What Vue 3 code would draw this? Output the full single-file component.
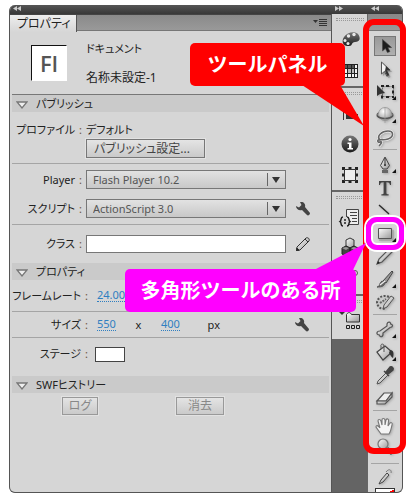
<script setup>
import { ref } from 'vue'

const player = ref('Flash Player 10.2')
const script = ref('ActionScript 3.0')
const className = ref('')

const corner = '<path d="M23 15v4h-4z" fill="#111"/>'

const toolGroups = [
  [
    { name: '選択', active: true, art: '<path d="M9 3v14l3.500-3 2.500 5 3-1.200-2.500-5h4.500z" fill="#1c1c1c" stroke="#444" stroke-width=".8"/>' },
    { name: 'ダイレクト選択', art: '<path d="M9 4v13l3-3 2.500 5 2-1-2.300-5h4z" fill="#777" opacity=".5" transform="translate(1 1)"/><path d="M8.500 4v12l3-2.700 2.300 5 2-1-2.300-5h3.500z" fill="#f4f4f4" stroke="#555" stroke-width="1"/><path d="M12 13l2 5 2-1-2.300-5h3.500L13 8z" fill="#333"/>' },
    { name: '自由変形', art: '<path d="M9.500 5.500h11v10h-11z" fill="none" stroke="#666" stroke-dasharray="2 1"/><path d="M8 4h3v2H8zM13 4h3v2h-3zM19 4h2v3h-2zM19 9.500h2v3h-2zM8 14.500h2v3H8zM13 15h3v2h-3zM19 15h2v2h-2z" fill="#222"/><path d="M4 4v11l3-2 5-1z" fill="#333"/>' + corner },
    { name: '3D 回転', art: '<ellipse cx="12" cy="11" rx="8" ry="3.500" fill="none" stroke="#666" stroke-width="1.300"/><circle cx="12" cy="10" r="6.500" fill="url(#ball)" stroke="#888" stroke-width=".6"/><path d="M4 11.500c3 4 13 4 16 0" fill="none" stroke="#555" stroke-width="1.300"/><path d="M12 3v16" stroke="#999" stroke-width=".7"/>' + corner },
    { name: 'なげなわ', art: '<path d="M7 13c-4-4 2-9 8-9s6 6 0 8c-4 1.500-7 0-8 1zm0 0c-3-1-3 3 0 2s1 2-1 4" fill="none" stroke="#f0f0f0" stroke-width="3"/><path d="M7 13c-4-4 2-9 8-9s6 6 0 8c-4 1.500-7 0-8 1zm0 0c-3-1-3 3 0 2s1 2-1 4" fill="none" stroke="#666" stroke-width="1.600"/>' }
  ],
  [
    { name: 'ペン', art: '<path d="M12 3l4.500 8.500L14 15h-4l-2.500-3.500z" fill="url(#metal)" stroke="#444"/><path d="M12 4v6" stroke="#333"/><circle cx="12" cy="11" r="1" fill="#222"/><path d="M9 16h6v3H9z" fill="#666"/>' + corner },
    { name: 'テキスト', art: '<path d="M6 4h12v4h-1c-.4-2-1-2.700-3.600-2.700V16c0 1 .6 1.300 2.200 1.300V18.500H8.400v-1.200c1.600 0 2.200-.3 2.200-1.300V5.300C8 5.300 7.400 6 7 8H6z" fill="#444"/>' },
    { name: '線', art: '<path d="M6 5l10 9" stroke="#2b2b2b" stroke-width="1.400"/>' },
    { name: '矩形', art: '<path d="M5.500 5.500h13v10h-13z" fill="url(#metal)" stroke="#555"/><path d="M6 17h14V7" fill="none" stroke="#999"/>' + corner },
    { name: '鉛筆', art: '<path d="M4 18l2-5L16 3l3 3L9 16z" fill="url(#metal)" stroke="#555" stroke-width="1.200"/><path d="M4 18l1-3 2 2z" fill="#222"/>' },
    { name: 'ブラシ', art: '<path d="M10 12L19 2l1 1-7 11z" fill="#999" stroke="#444"/><path d="M4 18c3 0 2-4 5-6l3 2c-1 4-5 4-8 4z" fill="#666" stroke="#555"/><path d="M7 16l5-4" stroke="#eee" stroke-width="1.300"/>' + corner },
    { name: 'デコ', art: '<path d="M10 17l1-4 7-9 3 2-7 9z" fill="url(#metal)" stroke="#555"/><path d="M16 5C10 2 4 6 4 11c1 4 4 7 9 5" fill="none" stroke="#555" stroke-width="2" stroke-dasharray="2 1.500"/><path d="M7 11l6-4" stroke="#666" stroke-width="2" stroke-dasharray="2 1"/>' }
  ],
  [
    { name: 'ボーン', art: '<path d="M14 5c1-3 4-2 3.500 0 3 .5 2.500 3.500-.5 3.500L10 14c.5 4-3 5-3.500 2C3 16 3 12 7 12l7-5z" fill="url(#metal)" stroke="#555" stroke-width="1.200"/>' + corner },
    { name: 'バケツ', art: '<path d="M4 10l8-6 7 6-9 8z" fill="url(#metal)" stroke="#444" stroke-width="1.200"/><path d="M11 10V4c0-3-4-2-3 0v3" fill="none" stroke="#555"/><path d="M17 8c4 0 4 4 3 8-2-1-3-4-4-5z" fill="#333"/>' + corner },
    { name: 'スポイト', art: '<path d="M4 19l1-3 8-8 2 2-8 8z" fill="url(#metal)" stroke="#555"/><path d="M11 6l5 5M13 7l4-5c2-1 4 1 3 3l-5 4z" fill="#444" stroke="#444" stroke-width="1.400"/>' },
    { name: '消しゴム', art: '<path d="M4 13l7-8h8l-6 8z" fill="#eee" stroke="#555" stroke-width="1.200"/><path d="M4 13v3h8l7-7V5l-6 8z" fill="url(#metal)" stroke="#555" stroke-width="1.200"/>' }
  ],
  [
    { name: '手のひら', art: '<path d="M8 19l-5-7c0-2 2-2 4 1L5 6c0-2 2-2 3 0l1 4V5c0-2 2.500-2 3 0v5l1-5c1-2 3-1 2.500 1l-.5 5 2-3c1-1 3 0 2 2-1 4-1 6-3 9z" fill="#f4f4f4" stroke="#777" stroke-width="1.100"/>' },
    { name: 'ズーム', art: '<path d="M14 10l5 6" stroke="#444" stroke-width="3"/><circle cx="10" cy="6" r="5" fill="url(#metal)" stroke="#777" stroke-width="1.200"/>' }
  ]
]

const dockGroups = [
  { id: 'color', items: [
    { name: 'カラー', art: '<path d="M20 5c-3-3-11-2-14 3-3 4-1 10 5 9 4 0 2-4 6-4 5 0 6-4 3-8z" fill="url(#dark)"/><g fill="#e8e8e8"><circle cx="16" cy="5.500" r="1.700"/><circle cx="10.500" cy="7" r="1.700"/><circle cx="7" cy="11.500" r="1.500"/><circle cx="10" cy="14.500" r="1.500"/></g>' },
    { name: 'スウォッチ', art: '<path d="M5 4h15v14H5z" fill="#222"/><g fill="#555"><path d="M6 5h3v3H6zM10 5h3v3h-3zM14 5h2v3h-2z"/></g><path d="M17 5h2v3h-2zM6 9h3v4H6zM17 9h2v4h-2zM6 14h3v3H6zM10 14h3v3h-3zM14 14h2v3h-2zM17 14h2v3h-2z" fill="#f3f3f3"/><path d="M10 9h3v4h-3zM14 9h2v4h-2z" fill="#bbb"/>' }
  ] },
  { id: 'info', items: [
    { name: '整列', art: '<path d="M5.500 4v14" stroke="#333"/><path d="M8 5h7v4H8zM8 12h12v5H8z" fill="#333"/>' },
    { name: '情報', art: '<circle cx="12" cy="11" r="8.500" fill="url(#dark)"/><circle cx="12" cy="6.500" r="1.600" fill="#fff"/><path d="M9.500 9.500h4V15h1.500v1.500H9.500V15h1.500v-4H9.500z" fill="#fff"/>' },
    { name: '変形', art: '<path d="M4 3h3v3H4zM10.500 3h3v3h-3zM17 3h3v3h-3zM4 9.500h3v3H4zM17 9.500h3v3h-3zM4 16h3v3H4zM10.500 16h3v3h-3zM17 16h3v3h-3z" fill="#222"/><path d="M6.500 5.500h11v11h-11z" fill="#eee" stroke="#333"/>' }
  ] },
  { id: 'code', items: [
    { name: 'コードスニペット', art: '<path d="M8.500 3.500h12v15h-12z" fill="#eee" stroke="#444"/><path d="M12 6.500h7M12 9.500h7M14 12.500h5M14 15.500h5" stroke="#444"/><path d="M2 11h9v9H2z" fill="#d6d6d6"/><path d="M5 11c-3 0-1 3-3 4.500 2 1 0 4.500 3 4.500M9 11c3 0 1 3 3 4.500-2 1 0 4.500-3 4.500" fill="none" stroke="#222" stroke-width="1.500"/><path d="M7 13v5" stroke="#222" stroke-width="1.500" stroke-dasharray="2 1"/>' },
    { name: 'コンポーネント', art: '<path d="M8 3l4-2 4 2v6l-4 2-4-2z" fill="url(#metal)" stroke="#333"/><path d="M4 11l4-2 4 2v6l-4 2-4-2zM12 11l4-2 4 2v6l-4 2-4-2z" fill="#444" stroke="#222"/><path d="M4 11l4-1 3 1-3 2zM13 11l3-1 3 1-3 2z" fill="#999"/>' },
    { name: 'モーション', art: '<circle cx="17" cy="5" r="2.500" fill="#ddd" stroke="#555"/><path d="M6 13l9-6" stroke="#555"/>' }
  ] },
  { id: 'project', items: [
    { name: 'プロジェクト', art: '<path d="M1 1h6L4 4z" fill="#333"/><path d="M8.500 11V3.500c2-3 4-2 5 0h8V11z" fill="url(#metal)" stroke="#333"/><path d="M8.500 14.500h3v3h-3zM13.500 14.500h3v3h-3zM18.500 14.500h3v3h-3z" fill="none" stroke="#222"/>' }
  ] }
]
</script>

<template>
  <main class="stage">
    <svg class="defs" aria-hidden="true">
      <defs>
        <linearGradient id="metal" x1="0" y1="0" x2="1" y2="1">
          <stop offset="0" stop-color="#fff" /><stop offset="1" stop-color="#999" />
        </linearGradient>
        <linearGradient id="dark" x1="0" y1="0" x2="0" y2="1">
          <stop offset="0" stop-color="#777" /><stop offset="1" stop-color="#1a1a1a" />
        </linearGradient>
        <radialGradient id="ball" cx=".4" cy=".3" r=".7">
          <stop offset="0" stop-color="#fff" /><stop offset="1" stop-color="#999" />
        </radialGradient>
      </defs>
    </svg>

    <div class="window">
      <section class="panel">
        <header class="strip">
          <svg class="chev" viewBox="0 0 8 5"><path d="M4 0v5L0 2.500zM8 0v5L4 2.500z" fill="#ccc" /></svg>
        </header>
        <nav class="tabs">
          <button class="tab" type="button">プロパティ</button>
          <button class="menu" type="button" aria-label="メニュー">
            <svg viewBox="0 0 14 9"><path d="M0 2h5L2.500 5z" fill="#333" /><path d="M6 1.500h8M6 3.500h8M6 5.500h8M6 7.500h8" stroke="#333" /></svg>
          </button>
        </nav>

        <div class="doc">
          <div class="logo">Fl</div>
          <div class="doc-text">
            <span>ドキュメント</span>
            <span class="kanji">名称未設定-1</span>
          </div>
        </div>

        <h2 class="bar ruled"><svg viewBox="0 0 12 8"><path d="M1 1h10L6 7z" fill="#eee" stroke="#777" stroke-width="1.300" /></svg>パブリッシュ</h2>
        <div class="publish group">
          <div class="row short"><span class="label">プロファイル<i>:</i></span><span>デフォルト</span></div>
          <div class="row short"><span class="label"></span><button class="btn wide" type="button">パブリッシュ設定...</button></div>
        </div>
        <div class="target group">
          <div class="row">
            <label class="label" for="player">Player<i>:</i></label>
            <span class="drop"><select id="player" v-model="player"><option>Flash Player 10.2</option></select></span>
          </div>
          <div class="row">
            <label class="label" for="script">スクリプト<i>:</i></label>
            <span class="drop"><select id="script" v-model="script"><option>ActionScript 3.0</option></select></span>
            <button class="tool-btn" type="button" aria-label="ActionScript 設定"><svg viewBox="0 0 14 14"><path d="M4 0c3-1 6 2 5 5l5 6c0 2-2 3-3 2L6 8C3 9 0 7 0 4l3 1.500L5.500 3z" fill="#444" /></svg></button>
          </div>
        </div>
        <div class="class-row">
          <div class="row">
            <label class="label" for="cls">クラス<i>:</i></label>
            <input id="cls" v-model="className" class="field" type="text" />
            <button class="tool-btn" type="button" aria-label="クラス定義を編集"><svg viewBox="0 0 14 14"><path d="M0 14l1-4L10 1c2-1 4 1 3 3l-9 9z" fill="url(#metal)" stroke="#333" /><path d="M0 14l1-3 2 2zM9 2l3 3" fill="#222" stroke="#333" /></svg></button>
          </div>
        </div>

        <h2 class="bar"><svg viewBox="0 0 12 8"><path d="M1 1h10L6 7z" fill="#eee" stroke="#777" stroke-width="1.300" /></svg>プロパティ</h2>
        <div class="line-row rate"><span class="label">フレームレート<i>:</i></span><a class="num" href="#">24.00</a></div>
        <div class="line-row size">
          <span class="label">サイズ<i>:</i></span><a class="num" href="#">550</a><span class="unit">x</span><a class="num" href="#">400</a><span class="unit px">px</span>
          <button class="tool-btn end" type="button" aria-label="ドキュメント設定"><svg viewBox="0 0 14 14"><path d="M4 0c3-1 6 2 5 5l5 6c0 2-2 3-3 2L6 8C3 9 0 7 0 4l3 1.500L5.500 3z" fill="#444" /></svg></button>
        </div>
        <div class="line-row color"><span class="label">ステージ<i>:</i></span><button class="swatch" type="button" aria-label="ステージカラー"></button></div>

        <h2 class="bar"><svg viewBox="0 0 12 8"><path d="M1 1h10L6 7z" fill="#eee" stroke="#777" stroke-width="1.300" /></svg>SWFヒストリー</h2>
        <div class="history">
          <button class="btn dim log" type="button" disabled>ログ</button>
          <button class="btn dim clear" type="button" disabled>消去</button>
        </div>
      </section>

      <aside class="dock">
        <header class="strip">
          <svg class="chev" viewBox="0 0 8 5"><path d="M0 0v5l4-2.500zM4 0v5l4-2.500z" fill="#ccc" /></svg>
        </header>
        <div v-for="g in dockGroups" :key="g.id" class="dock-group" :class="g.id">
          <span class="grip"></span>
          <button v-for="i in g.items" :key="i.name" type="button" :aria-label="i.name"><svg viewBox="0 0 24 22" v-html="i.art"></svg></button>
        </div>
      </aside>

      <aside class="tools">
        <header class="strip">
          <svg class="chev" viewBox="0 0 8 5"><path d="M4 0v5L0 2.500zM8 0v5L4 2.500z" fill="#ccc" /></svg>
        </header>
        <div class="tools-head"></div>
        <div v-for="(g, n) in toolGroups" :key="n" class="tool-group">
          <button v-for="t in g" :key="t.name" type="button" :class="{ active: t.active }" :aria-label="t.name"><svg viewBox="0 0 24 22" v-html="t.art"></svg></button>
        </div>
        <div class="stroke">
          <svg viewBox="0 0 24 22"><path d="M6 18l2-4 6-7 2 2-6 7z" fill="url(#metal)" stroke="#444" /><path d="M13 6c3-4 6-2 5 1" fill="none" stroke="#777" /></svg>
          <span class="stroke-chip"></span>
        </div>
      </aside>
    </div>

    <div class="frame"></div>
    <div class="callout red">
      <svg viewBox="0 0 62 41"><path d="M0 0h38l24 41z" fill="#f00" /></svg>ツールパネル
    </div>
    <div class="ring"></div>
    <div class="callout pink">
      <svg viewBox="0 0 52 27"><path d="M0 27L52 0 39 27z" fill="#f0f" /></svg>多角形ツールのある所
    </div>
  </main>
</template>

<style>
body { margin: 0; background: #fff; }
</style>

<style scoped>
* { box-sizing: border-box; }
.stage {
  position: relative;
  min-height: 100vh;
  padding: 5px 11px 3px 9px;
  display: flex;
  font: 12px/16px "Noto Sans", "Noto Sans CJK JP", sans-serif;
  font-feature-settings: "palt";
  color: #222;
}
.defs { position: absolute; width: 0; height: 0; }
button { font: inherit; font-feature-settings: inherit; color: inherit; padding: 0; border: 0; background: none; }
svg { display: block; }
i { font-style: normal; padding-left: 4px; color: #6b5440; }

.window {
  flex: 1;
  display: grid;
  grid-template-columns: 1fr 36px 34px;
  border: 1px solid #555;
  border-width: 0 1px 1px;
  border-radius: 6px;
  overflow: hidden;
  background: #646464;
}
.strip { height: 9px; padding: 1px 3px; background: linear-gradient(#555, #383838); }
.chev { width: 8px; height: 5px; }

.panel { background: #d6d6d6; border-right: 1px solid #555; min-width: 0; }
.panel > .strip { margin-right: -1px; }
.tabs { display: flex; justify-content: space-between; align-items: stretch; height: 17px; background: linear-gradient(#8a8a8a, #999); border-top: 1px solid #444; border-bottom: 1px solid #777; }
.tab { height: 17px; padding: 0 5px 0 7px; line-height: 15px; background: linear-gradient(#eee, #d6d6d6); border-right: 1px solid #555; }
.menu { padding-right: 4px; }
.menu svg { width: 14px; height: 9px; }

.doc { display: flex; gap: 19px; height: 63px; padding: 14px 0 0 21px; }
.logo { width: 36px; height: 36px; background: #fff; border: 1px solid #111; border-color: #111 #fff #fff #111; font: 600 22px/34px "Open Sans", sans-serif; text-align: center; color: #555; }
.doc-text { display: flex; flex-direction: column; gap: 13px; margin-top: -4px; font-size: 11px; }
.kanji { font-size: 12px; }

.bar { display: flex; align-items: center; gap: 8px; height: 17px; margin: 0 2px; padding-left: 4px; background: #cacaca; font-size: 11px; font-weight: normal; line-height: 16px; }
.bar svg { width: 12px; height: 8px; margin-top: 3px; }
.ruled { height: 18px; border-top: 1px solid #777; }

.row, .line-row { display: flex; align-items: center; font-size: 11px; }
.row { gap: 4px; }
.label { display: block; width: 72px; text-align: right; white-space: nowrap; }
.group { margin: 0 2px; border-bottom: 1px solid #a5a5a5; }
.group .label { width: 70px; }
.publish { padding: 8px 0 5px; }
.publish .row { height: 19px; }
.target { padding: 6px 0; display: grid; gap: 10px; }
.target .row { height: 19px; }
.class-row { padding: 10px 0; }
.class-row .row { height: 18px; }

.btn { height: 19px; border: 1px solid #777; outline: 1px solid #e2e2e2; background: linear-gradient(#e4e4e4, #cacaca); line-height: 16px; color: #444; font-size: 12px; }
.wide { width: 119px; padding-left: 7px; text-align: left; white-space: nowrap; }
.drop { position: relative; flex: 0 1 200px; height: 19px; }
.drop select { width: 100%; height: 19px; padding: 0 24px 0 6px; appearance: none; border: 1px solid #777; border-radius: 0; background: linear-gradient(#e2e2e2, #c8c8c8); font: inherit; line-height: 16px; color: #555; }
.drop::before { content: ""; position: absolute; right: 18px; top: 3px; height: 13px; border-left: 1px solid #666; }
.drop::after { content: ""; position: absolute; right: 6px; top: 7px; border: 4px solid transparent; border-top: 6px solid #333; border-bottom: 0; }
.field { flex: 0 1 200px; height: 18px; min-width: 0; padding: 0 4px; border: 1px solid #777; background: #fff; font: inherit; }
.tool-btn { width: 14px; height: 14px; margin-left: 6px; }

.line-row { margin-left: 2px; margin-right: 2px; border-bottom: 1px solid #a5a5a5; }
.line-row .label { width: 76px; margin-right: 9px; }
.rate { height: 32px; }
.size { height: 26px; }
.num { color: #2f7fc1; text-decoration: none; border-bottom: 1px dotted #2f7fc1; line-height: 12px; }
.unit { width: 45px; text-align: center; }
.px { width: 68px; }
.end { margin-left: auto; margin-right: 20px; }
.color { height: 38px; padding-bottom: 6px; border-bottom: 0; }
.color .label { margin-right: 7px; }
.swatch { width: 30px; height: 15px; border: 1px solid #444; background: #fff; }

.history { display: flex; gap: 78px; padding: 4px 0 0 52px; }
.dim { color: #888; border-color: #999; }
.log { width: 36px; height: 18px; }
.clear { width: 48px; height: 18px; }

.dock { border-right: 1px solid #666; }
.dock > .strip { margin-right: -1px; }
.dock-group { display: flex; flex-direction: column; align-items: center; padding: 4px 0 0; background: #d6d6d6; border-bottom: 2px solid #666; }
.dock button { height: 31px; width: 24px; }
.dock svg:not(.chev) { width: 24px; height: 22px; }
.grip { width: 28px; height: 3px; margin-bottom: 3px; border: 1px dotted #999; border-width: 1px 0; }
.color.dock-group { height: 74px; padding: 4px 0 0; border-bottom: 2px solid #666; }
.info { height: 104px; }
.code { height: 104px; }
.project { height: 43px; border-bottom: 0; }

.tools { background: #d6d6d6; display: flex; flex-direction: column; }
.tools-head { height: 17px; background: linear-gradient(#888, #999); border-bottom: 1px solid #777; }
.tool-group { display: flex; flex-direction: column; align-items: center; padding-top: 3px; }
.tool-group + .tool-group { border-top: 1px solid #a5a5a5; margin: 0 5px; }
.tool-group button { height: 23px; width: 24px; }
.tool-group svg, .stroke svg { width: 24px; height: 22px; filter: drop-shadow(1px 1px 1px #aaa); }
.tool-group .active { height: 20px; width: 22px; margin: 2px 0 1px; border: 1px solid #777; background: linear-gradient(#999, #b0b0b0); }
.tool-group .active svg { width: 20px; height: 18px; filter: none; }
.stroke { display: flex; flex-direction: column; align-items: center; margin: 3px 3px 0; padding-top: 2px; border-top: 1px solid #a5a5a5; }
.stroke-chip { width: 20px; height: 4px; border: 1px solid #333; border-bottom: 0; background: linear-gradient(150deg, #fff 80%, #f00 80%); }

.frame { position: absolute; right: 8px; top: 19px; width: 43px; height: 435px; border: 6px solid #f00; border-radius: 11px; }
.callout { position: absolute; height: 43px; border-radius: 5px; font: bold 20px/42px "Noto Sans CJK JP", sans-serif; font-feature-settings: normal; color: #fff; text-align: center; white-space: nowrap; }
.callout svg { position: absolute; }
.red { right: 69px; top: 43px; width: 155px; background: #f00; }
.red svg { left: 112px; top: 42px; width: 62px; height: 41px; }
.pink { right: 58px; top: 269px; width: 231px; background: #f0f; }
.pink svg { left: 189px; top: -26px; width: 52px; height: 27px; }
.ring { position: absolute; right: 10px; top: 217px; width: 38px; height: 33px; border: 5px solid #f0f; border-radius: 11px; box-shadow: 0 0 0 2px #fff, inset 0 0 0 2px #fff; }
</style>
